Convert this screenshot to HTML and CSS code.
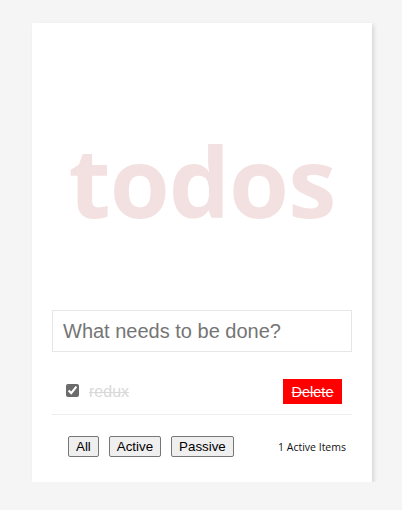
FILE: index.html
```html
<!DOCTYPE html>
<html>
<head>
<meta charset="utf-8">
<link rel="stylesheet" href="styles.css">
</head>
<body>
<div class="app">
  <h1 class="title">todos</h1>
  <input class="new-todo" type="text" placeholder="What needs to be done?">
  <ul class="list">
    <li class="item done">
      <input class="toggle" type="checkbox" checked>
      <span class="label">redux</span>
      <button class="delete">Delete</button>
    </li>
  </ul>
  <div class="footer">
    <div class="filters">
      <button class="filter">All</button>
      <button class="filter">Active</button>
      <button class="filter">Passive</button>
    </div>
    <span class="count">1 Active Items</span>
  </div>
</div>
</body>
</html>
```
FILE: styles.css
```css
html, body {
  margin: 0;
  padding: 0;
}
body {
  background: #f5f5f5;
  font-family: "Liberation Sans", Arial, sans-serif;
  padding: 23px 0 0 32px;
}
.app {
  width: 300px;
  background: #fff;
  padding: 20px 20px 20px 20px;
  box-shadow: 2px 2px 4px rgba(0,0,0,0.12);
}
.title {
  margin: 71px 0 64px;
  font-family: "Open Sans", sans-serif;
  font-weight: 700;
  font-size: 97px;
  line-height: 132px;
  text-align: center;
  color: rgba(175, 47, 47, 0.15);
  letter-spacing: -1px;
}
.new-todo {
  display: block;
  box-sizing: border-box;
  width: 300px;
  height: 42px;
  margin: 0;
  padding: 0 10px;
  border: 1px solid #e6e6e6;
  font-family: "Liberation Sans", Arial, sans-serif;
  font-size: 20px;
  color: #333;
  outline: none;
}
.new-todo::placeholder {
  color: #757575;
}
.list {
  list-style: none;
  margin: 27px 0 0;
  padding: 0;
}
.item {
  display: flex;
  align-items: center;
  height: 25px;
  padding: 0 10px 10px 14px;
  border-bottom: 1px solid #ededed;
}
.toggle {
  width: 13px;
  height: 13px;
  margin: 0 10px 0 0;
  accent-color: #6b6b6b;
  position: relative;
  top: -1px;
}
.label {
  flex: 1;
  font-size: 16px;
  color: #d9d9d9;
}
.done .label {
  text-decoration: line-through;
}
.delete {
  width: 59px;
  height: 25px;
  border: none;
  background: #ff0000;
  color: #fff;
  font-family: "Liberation Sans", Arial, sans-serif;
  font-size: 14.5px;
  text-decoration: line-through;
  padding: 0;
}
.footer {
  display: flex;
  align-items: center;
  justify-content: space-between;
  padding: 21px 6px 5px 16px;
}
.filters {
  display: flex;
  gap: 10px;
}
.filter {
  font-family: "Liberation Sans", Arial, sans-serif;
  font-size: 13.333px;
  height: 21px;
  padding: 1px 7px;
  margin: 0;
  background: #efefef;
  border: 1px solid #767676;
  border-radius: 2px;
  color: #000;
}
.count {
  font-family: "Open Sans", sans-serif;
  font-size: 10.5px;
  color: #111;
}
```
